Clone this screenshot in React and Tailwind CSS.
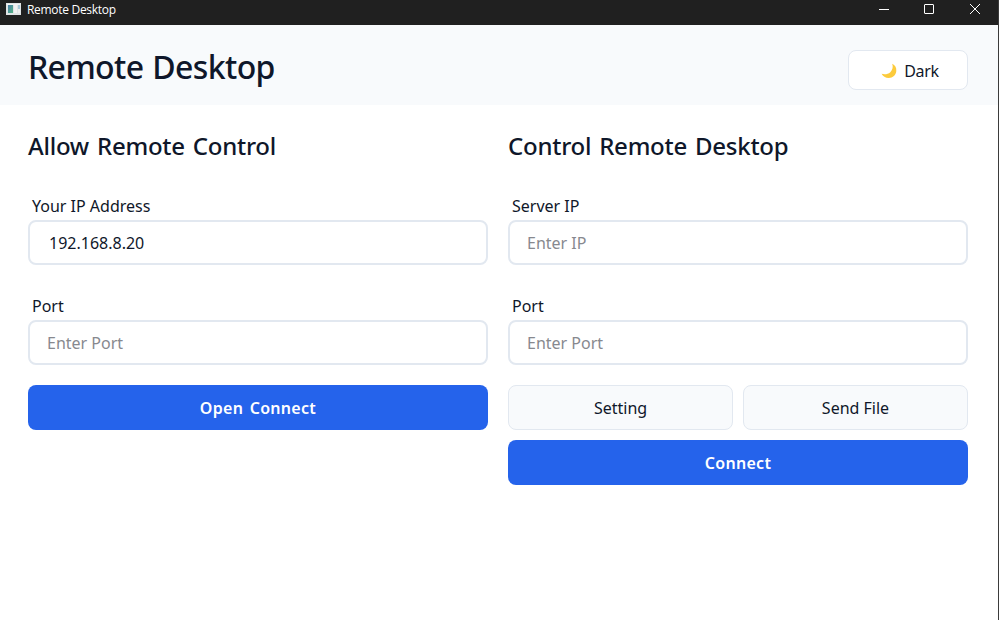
import React from "react";

function AppIcon() {
  return (
    <svg width="15" height="12" viewBox="0 0 15 12" shapeRendering="crispEdges">
      <defs>
        <linearGradient id="pane" x1="0" y1="0" x2="1" y2="1">
          <stop offset="0" stopColor="#4a7fa8" />
          <stop offset="1" stopColor="#55b384" />
        </linearGradient>
      </defs>
      <rect width="15" height="12" fill="#dfe3e4" />
      <rect x="1" y="1" width="13" height="1" fill="#f4f4f4" />
      <rect x="2" y="2" width="5" height="8" fill="url(#pane)" />
      <rect x="8" y="2" width="3" height="8" fill="#f1f1f1" />
      <rect x="12" y="2" width="2" height="4" fill="#a9c9d8" />
      <rect x="12" y="6" width="2" height="4" fill="#eeeeee" />
    </svg>
  );
}

function TitleBar() {
  return (
    <div className="flex h-[25px] items-start justify-between bg-[#202020] text-white">
      <div className="flex pt-[3px] pl-[6px]">
        <AppIcon />
        <span className="ml-[6px] font-['Open_Sans','Noto_Sans',sans-serif] text-[12px] leading-[14px] tracking-[-0.3px]">
          Remote Desktop
        </span>
      </div>
      <div className="flex pt-[4px] pr-[18px]">
        <svg className="mr-[35px]" width="10" height="10" viewBox="0 0 10 10" stroke="#fff" fill="none">
          <path d="M0 5.5H10" />
        </svg>
        <svg className="mr-[36px]" width="10" height="10" viewBox="0 0 10 10" stroke="#fff" fill="none">
          <rect x=".5" y=".5" width="9" height="9" rx=".5" />
        </svg>
        <svg width="10" height="10" viewBox="0 0 10 10" stroke="#fff" fill="none">
          <path d="M0 0L10 10M10 0L0 10" />
        </svg>
      </div>
    </div>
  );
}

function Moon() {
  return (
    <svg width="16" height="16" viewBox="0 0 16 16">
      <path
        d="M11.2 .8C14 2.2 15.6 4.6 15.3 8C15 12 11.8 15 7.8 15C4.5 15 1.8 13.4 .6 10.8C3.5 11.7 7 11.3 9.3 9.2C11.6 7.1 12.3 3.8 11.2 .8Z"
        fill="#fccb3c"
      />
    </svg>
  );
}

function Field({ label, value, placeholder }) {
  return (
    <label className="flex h-[80px] flex-col">
      <span className="h-[35px] pt-[9px] pl-[4px] leading-[24px]">{label}</span>
      <input
        className="h-[45px] w-full rounded-[8px] border-2 border-[#e2e8f0] bg-white px-[17px] pt-px outline-none placeholder:text-[#87898f] not-placeholder-shown:pl-[19px]"
        defaultValue={value}
        placeholder={placeholder}
      />
    </label>
  );
}

function PrimaryButton({ children }) {
  return (
    <button className="h-[45px] w-full rounded-[8px] bg-[#2563eb] font-semibold tracking-[0.3px] text-white [word-spacing:2px]">
      {children}
    </button>
  );
}

function SecondaryButton({ children }) {
  return (
    <button className="h-[45px] flex-1 rounded-[8px] border border-[#e2e8f0] bg-[#f8fafc]">
      {children}
    </button>
  );
}

function Panel({ title, children }) {
  return (
    <section className="w-[460px]">
      <h2 className="mb-[15px] h-[40px] text-[24px] leading-[32px] font-medium tracking-[-0.25px] [word-spacing:2px]">
        {title}
      </h2>
      {children}
    </section>
  );
}

export default function App() {
  return (
    <div className="h-[620px] w-[999px] overflow-hidden border-r border-[#3b3b3b] bg-white font-['Noto_Sans',sans-serif] text-[16px] text-[#0f172a]">
      <TitleBar />
      <header className="flex h-[80px] items-start justify-between bg-[#f8fafc] pr-[30px] pl-[28px]">
        <h1 className="pt-[18px] text-[32px] leading-[48px] font-medium tracking-[-0.6px] [word-spacing:1px]">
          Remote Desktop
        </h1>
        <button className="mt-[25px] flex h-[40px] w-[120px] items-center justify-center gap-[7px] rounded-[8px] border border-[#e2e8f0] bg-white pt-px pl-[4px]">
          <Moon />
          <span className="tracking-[-0.3px]">Dark</span>
        </button>
      </header>
      <main className="flex gap-[20px] pt-[25px] pl-[28px]">
        <Panel title="Allow Remote Control">
          <div className="flex flex-col gap-[20px]">
            <Field label="Your IP Address" value="192.168.8.20" />
            <Field label="Port" placeholder="Enter Port" />
            <PrimaryButton>Open Connect</PrimaryButton>
          </div>
        </Panel>
        <Panel title="Control Remote Desktop">
          <div className="flex flex-col gap-[20px]">
            <Field label="Server IP" placeholder="Enter IP" />
            <Field label="Port" placeholder="Enter Port" />
            <div className="flex flex-col gap-[10px]">
              <div className="flex gap-[10px]">
                <SecondaryButton>Setting</SecondaryButton>
                <SecondaryButton>Send File</SecondaryButton>
              </div>
              <PrimaryButton>Connect</PrimaryButton>
            </div>
          </div>
        </Panel>
      </main>
    </div>
  );
}
